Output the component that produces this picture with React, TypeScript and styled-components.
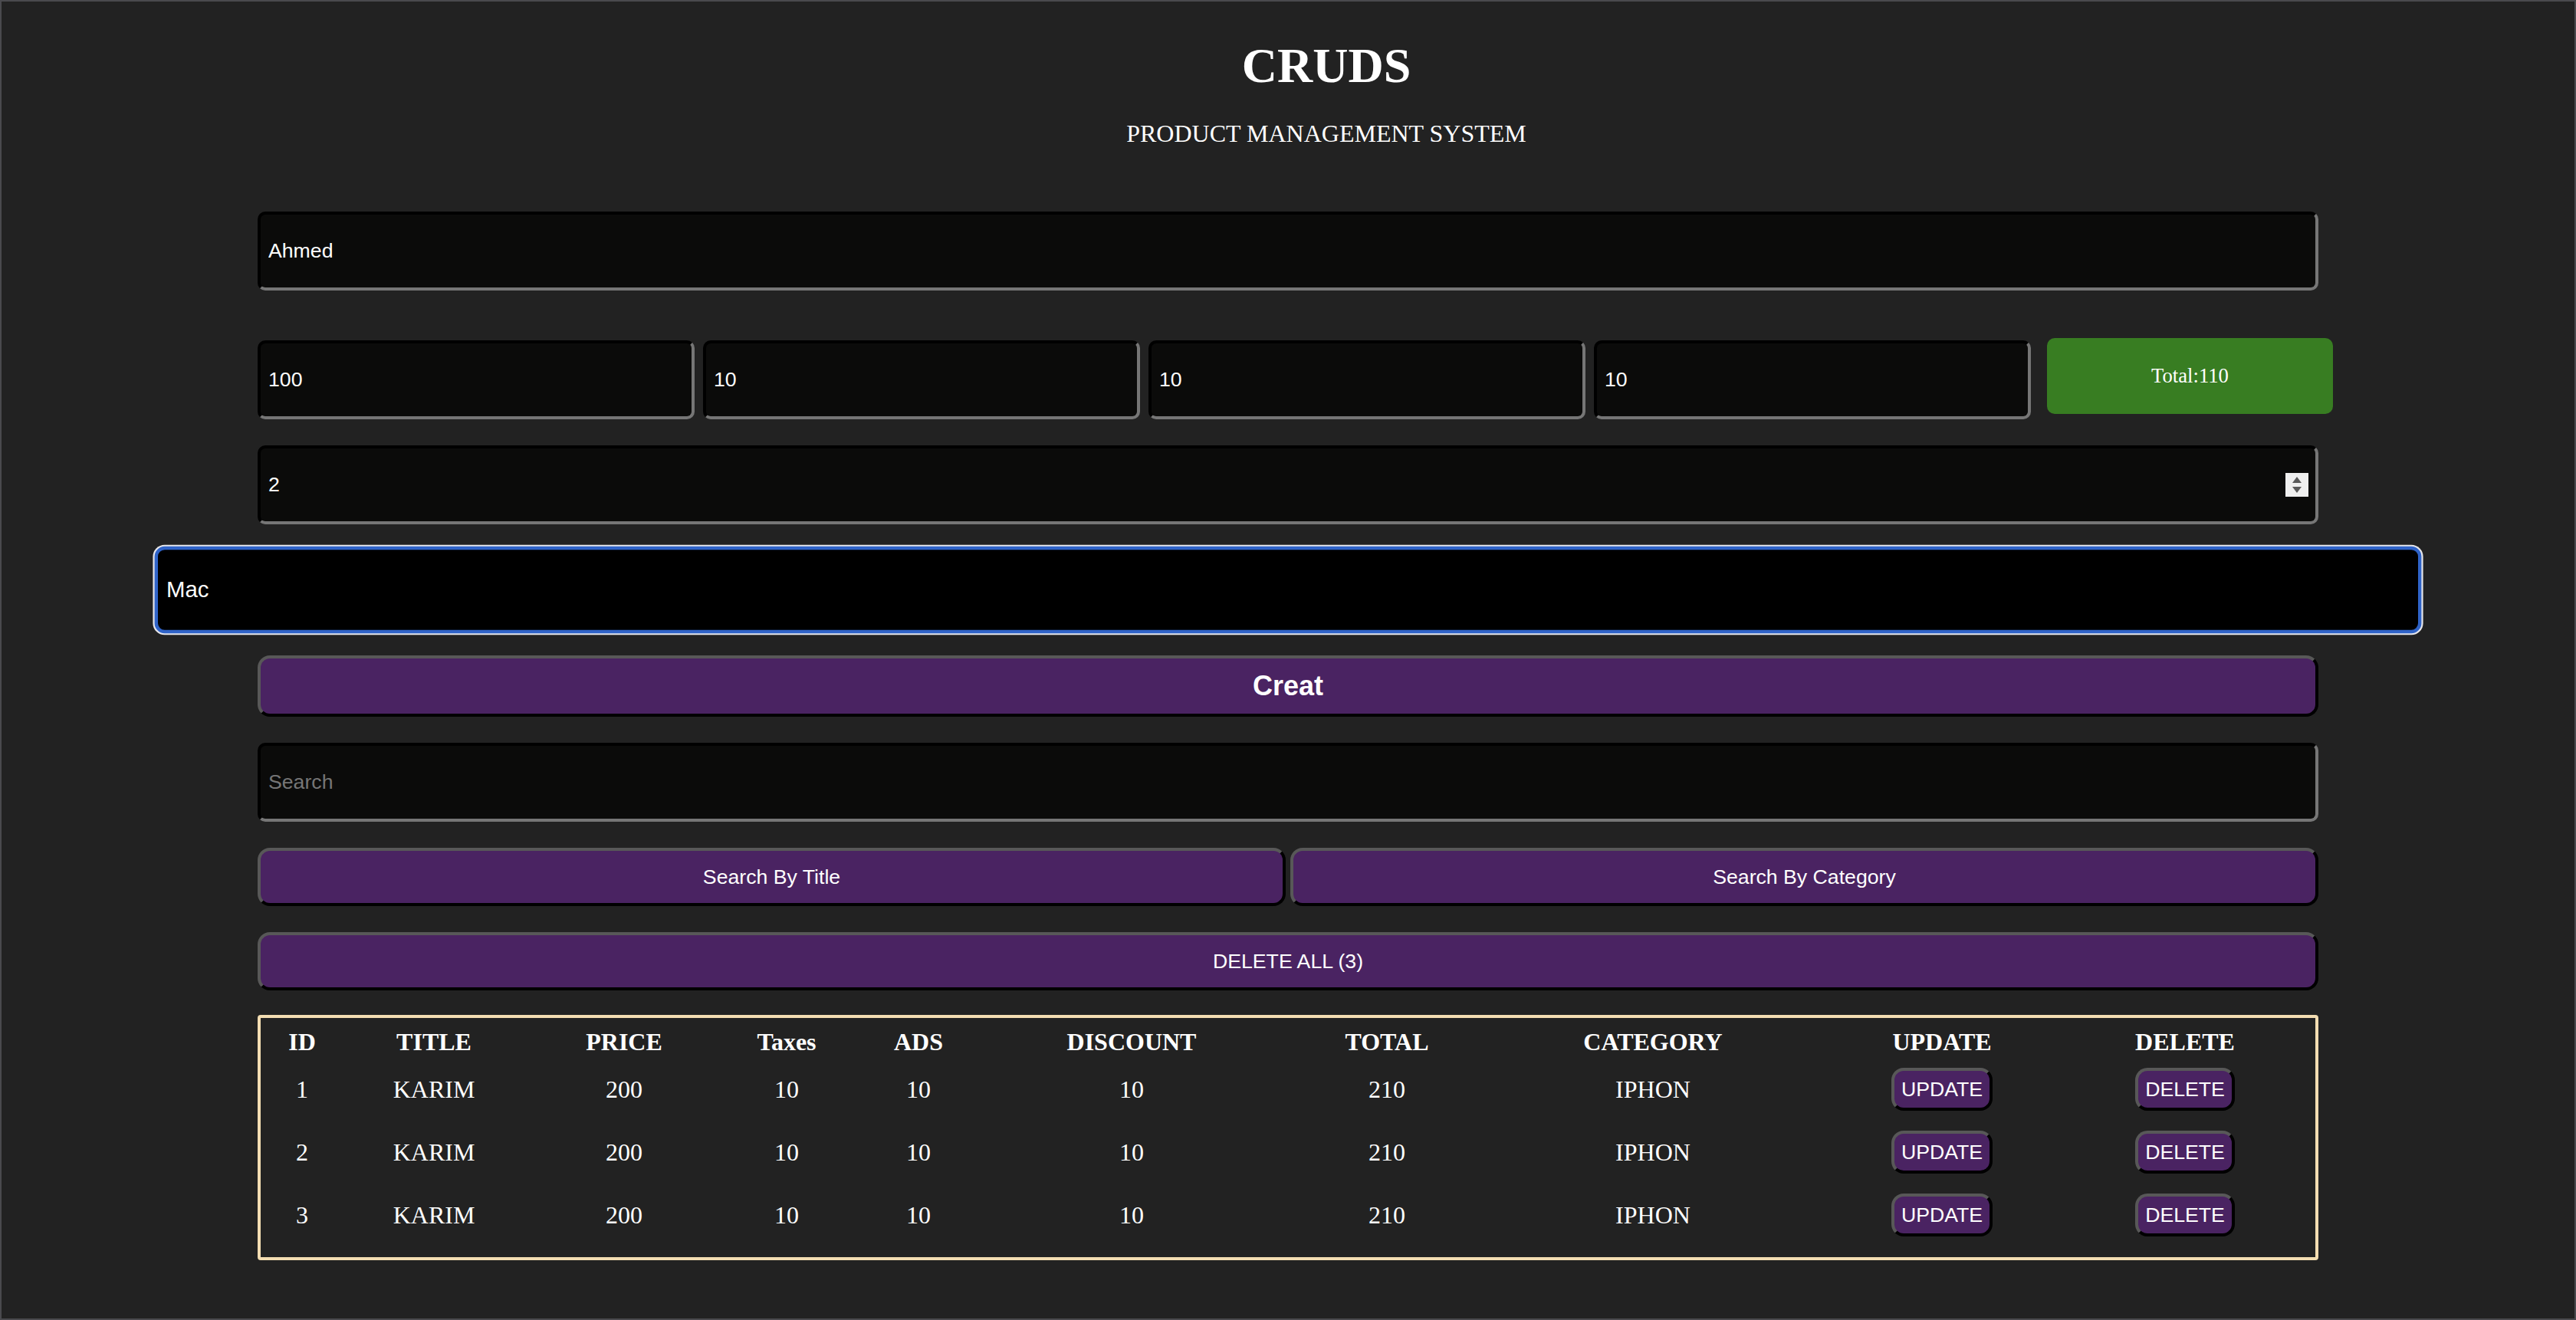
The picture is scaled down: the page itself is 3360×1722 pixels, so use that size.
import React from "react";
import styled, { createGlobalStyle } from "styled-components";

const GlobalStyle = createGlobalStyle`
  html, body { margin: 0; padding: 0; background: #222222; }
  body { font-family: "Liberation Serif", "Times New Roman", serif; color: #ffffff; }
  * { box-sizing: border-box; }
`;

const Page = styled.div`
  min-height: 100vh;
  border: 2px solid #4a4a4e;
  background: #222222;
`;

const Header = styled.header`
  text-align: center;
  padding-top: 48px;
  padding-left: 100px;
`;

const Title = styled.h1`
  margin: 0;
  font-size: 64px;
  font-weight: bold;
  line-height: 71px;
`;

const Subtitle = styled.p`
  margin: 35px 0 0;
  font-size: 32px;
  line-height: 36px;
`;

const Form = styled.main`
  width: 2688px;
  margin: 84px auto 0;
  display: flex;
  flex-direction: column;
  gap: 34px;
`;

const Field = styled.input<{ $focused?: boolean }>`
  display: block;
  width: 100%;
  height: 103px;
  padding: 0 10px;
  background: ${(p) => (p.$focused ? "#000000" : "#0b0b0a")};
  color: #ffffff;
  font-family: "Liberation Sans", Arial, sans-serif;
  font-size: 26.67px;
  border: 4px solid;
  border-color: ${(p) =>
    p.$focused ? "#2f63c8" : "#000000 #767676 #767676 #000000"};
  border-radius: ${(p) => (p.$focused ? "12px" : "10px")};
  box-shadow: ${(p) => (p.$focused ? "0 0 0 2px #e6e6ea" : "none")};
  transform: ${(p) => (p.$focused ? "scale(1.1)" : "none")};
  outline: none;
  -moz-appearance: textfield;
  &::placeholder {
    color: #767676;
  }
  &::-webkit-inner-spin-button,
  &::-webkit-outer-spin-button {
    -webkit-appearance: none;
    margin: 0;
  }
`;

const PriceRow = styled.div`
  display: flex;
  align-items: flex-start;
  gap: 11px;
  margin-top: 28px;
`;

const PriceField = styled(Field)`
  flex: none;
  width: 570px;
  margin-top: 3px;
`;

const Total = styled.div`
  flex: none;
  width: 373px;
  height: 99px;
  margin-left: 10px;
  background: #387d22;
  border-radius: 10px;
  display: flex;
  align-items: center;
  justify-content: center;
  font-size: 26.67px;
`;

const NumberWrap = styled.div`
  position: relative;
`;

const Spinner = styled.svg`
  position: absolute;
  right: 13px;
  top: 36px;
  width: 30px;
  height: 31px;
  pointer-events: none;
`;

const Button = styled.button<{ $big?: boolean }>`
  display: block;
  width: 100%;
  height: ${(p) => (p.$big ? "80px" : "76px")};
  padding: 0 12px;
  background: #4a2362;
  color: #ffffff;
  font-family: "Liberation Sans", Arial, sans-serif;
  font-size: ${(p) => (p.$big ? "36px" : "26.67px")};
  font-weight: ${(p) => (p.$big ? "bold" : "normal")};
  border: 4px solid;
  border-color: #585858 #000000 #000000 #585858;
  border-radius: 16px;
  cursor: pointer;
`;

const SearchRow = styled.div`
  display: flex;
  gap: 6px;
`;

const TableFrame = styled.section`
  border: 4px solid #f3ddb2;
  border-radius: 4px;
  padding: 10px 28px 14px 0;
  margin-top: -2px;
`;

const Table = styled.table`
  width: 100%;
  table-layout: fixed;
  border-collapse: collapse;
  font-size: 32px;
  color: #ffffff;
`;

const Th = styled.th`
  height: 42px;
  padding: 0;
  font-weight: bold;
  text-align: center;
  line-height: 36px;
`;

const Td = styled.td`
  height: 82px;
  padding: 0;
  text-align: center;
  vertical-align: middle;
`;

const RowButton = styled.button`
  height: 56px;
  padding: 0 9px;
  background: #4a2362;
  color: #ffffff;
  font-family: "Liberation Sans", Arial, sans-serif;
  font-size: 26.67px;
  border: 4px solid;
  border-color: #585858 #000000 #000000 #585858;
  border-radius: 16px;
  cursor: pointer;
`;

const columns = [
  { label: "ID", w: 108 },
  { label: "TITLE", w: 236 },
  { label: "PRICE", w: 260 },
  { label: "Taxes", w: 164 },
  { label: "ADS", w: 180 },
  { label: "DISCOUNT", w: 376 },
  { label: "TOTAL", w: 290 },
  { label: "CATEGORY", w: 404 },
  { label: "UPDATE", w: 350 },
  { label: "DELETE", w: 284 },
];

const rows = [1, 2, 3].map((id) => ({
  id,
  title: "KARIM",
  price: 200,
  taxes: 10,
  ads: 10,
  discount: 10,
  total: 210,
  category: "IPHON",
}));

export default function App() {
  return (
    <>
      <GlobalStyle />
      <Page>
        <Header>
          <Title>CRUDS</Title>
          <Subtitle>PRODUCT MANAGEMENT SYSTEM</Subtitle>
        </Header>
        <Form>
          <Field type="text" defaultValue="Ahmed" placeholder="title" />
          <PriceRow>
            <PriceField type="number" defaultValue="100" placeholder="price" />
            <PriceField type="number" defaultValue="10" placeholder="taxes" />
            <PriceField type="number" defaultValue="10" placeholder="ads" />
            <PriceField type="number" defaultValue="10" placeholder="discount" />
            <Total>Total:110</Total>
          </PriceRow>
          <NumberWrap>
            <Field type="number" defaultValue="2" placeholder="count" />
            <Spinner viewBox="0 0 30 31">
              <rect x="0" y="0" width="30" height="31" fill="#efefef" />
              <path d="M15 5 L21 13 L9 13 Z" fill="#5a5a5a" />
              <path d="M15 26 L21 18 L9 18 Z" fill="#5a5a5a" />
            </Spinner>
          </NumberWrap>
          <Field type="text" defaultValue="Mac" placeholder="category" $focused />
          <Button $big>Creat</Button>
          <Field type="text" placeholder="Search" />
          <SearchRow>
            <Button>Search By Title</Button>
            <Button>Search By Category</Button>
          </SearchRow>
          <Button>DELETE ALL (3)</Button>
          <TableFrame>
            <Table>
              <colgroup>
                {columns.map((c) => (
                  <col key={c.label} style={{ width: c.w }} />
                ))}
              </colgroup>
              <thead>
                <tr>
                  {columns.map((c) => (
                    <Th key={c.label}>{c.label}</Th>
                  ))}
                </tr>
              </thead>
              <tbody>
                {rows.map((r) => (
                  <tr key={r.id}>
                    <Td>{r.id}</Td>
                    <Td>{r.title}</Td>
                    <Td>{r.price}</Td>
                    <Td>{r.taxes}</Td>
                    <Td>{r.ads}</Td>
                    <Td>{r.discount}</Td>
                    <Td>{r.total}</Td>
                    <Td>{r.category}</Td>
                    <Td>
                      <RowButton>UPDATE</RowButton>
                    </Td>
                    <Td>
                      <RowButton>DELETE</RowButton>
                    </Td>
                  </tr>
                ))}
              </tbody>
            </Table>
          </TableFrame>
        </Form>
      </Page>
    </>
  );
}
